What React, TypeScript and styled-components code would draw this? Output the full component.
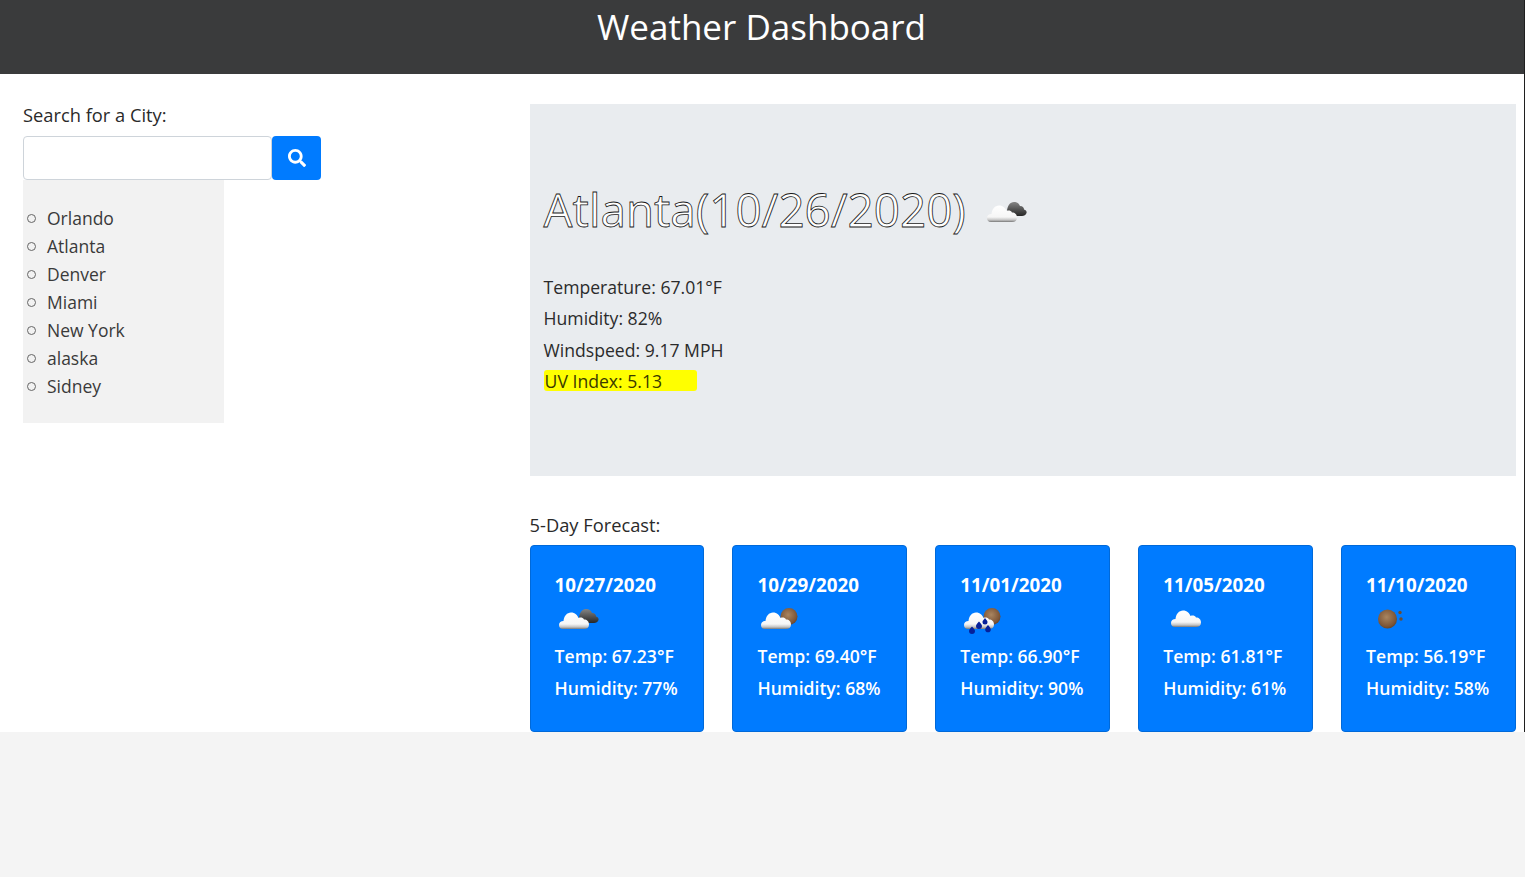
import React from "react";
import styled, { createGlobalStyle } from "styled-components";
import { FaSearch } from "react-icons/fa";

const Global = createGlobalStyle`
  html, body { margin: 0; padding: 0; height: 100%; background: #f4f4f4; }
  body { font-family: "Open Sans", "Noto Sans", "Liberation Sans", sans-serif; color: #212529; overflow: hidden; }
  #root { min-height: 100%; }
  * { box-sizing: border-box; }
`;

const Page = styled.div`
  display: flex;
  flex-direction: column;
  min-height: 877px;
  background: #f4f4f4;
`;

const Header = styled.header`
  height: 74px;
  background: #3a3b3c;
  display: flex;
  justify-content: center;
  padding-right: 1px;
  border-right: 1px solid #1f1f1f;
`;

const Title = styled.h1`
  margin: 0;
  font-size: 35px;
  font-weight: 400;
  line-height: 54px;
  color: #fff;
`;

const Main = styled.main`
  display: grid;
  grid-template-columns: 529.6px 1fr;
  height: 658px;
  background: #fff;
  padding: 30px 8px 0 0;
  border-right: 1px solid #1f1f1f;
`;

const Sidebar = styled.aside`
  padding-left: 23px;
`;

const SearchLabel = styled.label`
  display: block;
  font-size: 18.3px;
  line-height: 22px;
  margin-bottom: 10px;
  color: #2a2a2a;
`;

const SearchRow = styled.div`
  display: flex;
  width: 298px;
  height: 44px;
`;

const SearchInput = styled.input`
  width: 249px;
  height: 100%;
  border: 1px solid #ced4da;
  border-radius: 4px;
  background: #fff;
  outline: none;
`;

const SearchButton = styled.button`
  flex: 1;
  border: 0;
  padding: 0;
  border-radius: 4px;
  background: #007bff;
  color: #fff;
  display: flex;
  align-items: center;
  justify-content: center;
`;

const CityList = styled.ul`
  width: 201px;
  height: 243px;
  margin: 0;
  padding: 24px 0 0 24px;
  background: #f2f2f2;
  list-style: none;
`;

const City = styled.li`
  position: relative;
  font-size: 17.5px;
  line-height: 28px;
  color: #3a3a3a;
  &::before {
    content: "";
    position: absolute;
    left: -20px;
    top: 10px;
    width: 7px;
    height: 7px;
    border: 1px solid #666;
    border-radius: 50%;
  }
`;

const Content = styled.section`
  display: flex;
  flex-direction: column;
`;

const Hero = styled.div`
  height: 372px;
  background: #e9ecef;
  padding: 75px 14px 0;
`;

const HeroHeading = styled.div`
  display: flex;
  align-items: center;
  gap: 17px;
  height: 60px;
  margin-bottom: 33px;
`;

const CityTitle = styled.h2`
  margin: 0;
  font-size: 45.8px;
  font-weight: 400;
  line-height: 58px;
  color: #fff;
  -webkit-text-stroke: 0.8px #1a1a1a;
`;

const HeroIcon = styled.div`
  margin-top: 8px;
  display: flex;
`;

const Stat = styled.p`
  margin: 0;
  height: 31.4px;
  font-size: 17.6px;
  line-height: 31.4px;
  color: #2b2b2b;
`;

const UvBadge = styled.p`
  margin: 4px 0 0;
  width: 153px;
  height: 21px;
  padding: 0 1px;
  font-size: 17.6px;
  line-height: 22px;
  background: #ffff00;
  border-radius: 3px;
  color: #3a3a00;
`;

const ForecastLabel = styled.h3`
  margin: 37px 0 8px;
  font-size: 18.3px;
  font-weight: 400;
  line-height: 24px;
  color: #2a2a2a;
`;

const Cards = styled.div`
  display: flex;
  gap: 28px;
`;

const Card = styled.article`
  flex: 1;
  height: 187px;
  padding: 27px 24px 0;
  background: #007bff;
  border: 1px solid #0069d9;
  border-radius: 4px;
  color: #fff;
`;

const CardDate = styled.div`
  font-size: 18.8px;
  font-weight: 700;
  line-height: 24px;
  white-space: nowrap;
`;

const CardIcon = styled.div`
  height: 30px;
  margin: 8px 0 6px;
  display: flex;
`;

const CardText = styled.div`
  font-size: 17.6px;
  font-weight: 600;
  line-height: 31.5px;
  white-space: nowrap;
`;

type Kind = "dark" | "partly" | "rain" | "cloud" | "moon";

const Defs = () => (
  <defs>
    <linearGradient id="cloudFill" x1="0" y1="0" x2="0" y2="1">
      <stop offset="0" stopColor="#ffffff" />
      <stop offset="0.7" stopColor="#f6f6f6" />
      <stop offset="0.88" stopColor="#c4c4c4" />
      <stop offset="1" stopColor="#777777" />
    </linearGradient>
    <linearGradient id="darkFill" x1="0" y1="0" x2="0" y2="1">
      <stop offset="0" stopColor="#858585" />
      <stop offset="1" stopColor="#262626" />
    </linearGradient>
    <radialGradient id="sunFill" cx="0.45" cy="0.4" r="0.65">
      <stop offset="0" stopColor="#a98560" />
      <stop offset="0.75" stopColor="#7d5638" />
      <stop offset="1" stopColor="#5d3f28" />
    </radialGradient>
  </defs>
);

const CLOUD =
  "M8 24C5 24 4 22 4 20C4 17.500 6 16 8.500 16C9 11 12 7.500 16 7.500C20 7.500 22.500 10 23.500 13C25.500 12 28 12.500 29 14.500C32 14.500 34 16.500 34 19.500C34 22.500 32 24 29 24Z";

const WeatherIcon = ({ kind }: { kind: Kind }) => (
  <svg width={48} height={30} viewBox="0 0 48 30" fill="none" aria-hidden>
    <Defs />
    {kind === "dark" && (
      <path
        d="M24 14C24 8 27 4 31 4C34 4 36 5.500 37 8C40 8 41 10 41 11.500C43 12 44 13.500 43.500 15C43 17 41 18 39 18L28 18Z"
        fill="url(#darkFill)"
      />
    )}
    {(kind === "partly" || kind === "rain") && <circle cx="32" cy="11.500" r="8.500" fill="url(#sunFill)" />}
    {kind === "moon" && (
      <g>
        <circle cx="21.500" cy="14" r="9.500" fill="url(#sunFill)" />
        <circle cx="34" cy="7.500" r="1.700" fill="#6c4d33" />
        <circle cx="35" cy="14" r="1.700" fill="#6c4d33" />
      </g>
    )}
    {kind !== "moon" && (
      <path transform={kind === "cloud" ? "translate(4 -2)" : undefined} d={CLOUD} fill="url(#cloudFill)" />
    )}
    {kind === "rain" && (
      <g fill="#06209a">
        <path d="M12 21.500c1.600 2 3 3.200 3 4.600a3 3 0 0 1-6 0C9 24.700 10.400 23.500 12 21.500Z" />
        <path d="M19 16.500c1.600 2 3 3.200 3 4.600a3 3 0 0 1-6 0C16 19.700 17.400 18.500 19 16.500Z" />
        <path d="M25 13c1.300 1.700 2.500 2.800 2.500 4a2.500 2.500 0 0 1-5 0C22.500 15.800 23.700 14.700 25 13Z" />
        <path d="M28 20c1.500 1.900 2.800 3.100 2.800 4.400a2.800 2.800 0 0 1-5.600 0C25.200 23.100 26.500 21.900 28 20Z" />
      </g>
    )}
  </svg>
);

const cities = ["Orlando", "Atlanta", "Denver", "Miami", "New York", "alaska", "Sidney"];

const forecast: { date: string; temp: string; humidity: string; kind: Kind }[] = [
  { date: "10/27/2020", temp: "67.23", humidity: "77", kind: "dark" },
  { date: "10/29/2020", temp: "69.40", humidity: "68", kind: "partly" },
  { date: "11/01/2020", temp: "66.90", humidity: "90", kind: "rain" },
  { date: "11/05/2020", temp: "61.81", humidity: "61", kind: "cloud" },
  { date: "11/10/2020", temp: "56.19", humidity: "58", kind: "moon" },
];

export default function App() {
  return (
    <Page>
      <Global />
      <Header>
        <Title>Weather Dashboard</Title>
      </Header>
      <Main>
        <Sidebar>
          <SearchLabel htmlFor="city">Search for a City:</SearchLabel>
          <SearchRow>
            <SearchInput id="city" />
            <SearchButton aria-label="Search">
              <FaSearch size={18} />
            </SearchButton>
          </SearchRow>
          <CityList>
            {cities.map((c) => (
              <City key={c}>{c}</City>
            ))}
          </CityList>
        </Sidebar>
        <Content>
          <Hero>
            <HeroHeading>
              <CityTitle>Atlanta(10/26/2020)</CityTitle>
              <HeroIcon>
                <WeatherIcon kind="dark" />
              </HeroIcon>
            </HeroHeading>
            <Stat>Temperature: 67.01°F</Stat>
            <Stat>Humidity: 82%</Stat>
            <Stat>Windspeed: 9.17 MPH</Stat>
            <UvBadge>UV Index: 5.13</UvBadge>
          </Hero>
          <ForecastLabel>5-Day Forecast:</ForecastLabel>
          <Cards>
            {forecast.map((f) => (
              <Card key={f.date}>
                <CardDate>{f.date}</CardDate>
                <CardIcon>
                  <WeatherIcon kind={f.kind} />
                </CardIcon>
                <CardText>Temp: {f.temp}°F</CardText>
                <CardText>Humidity: {f.humidity}%</CardText>
              </Card>
            ))}
          </Cards>
        </Content>
      </Main>
    </Page>
  );
}
